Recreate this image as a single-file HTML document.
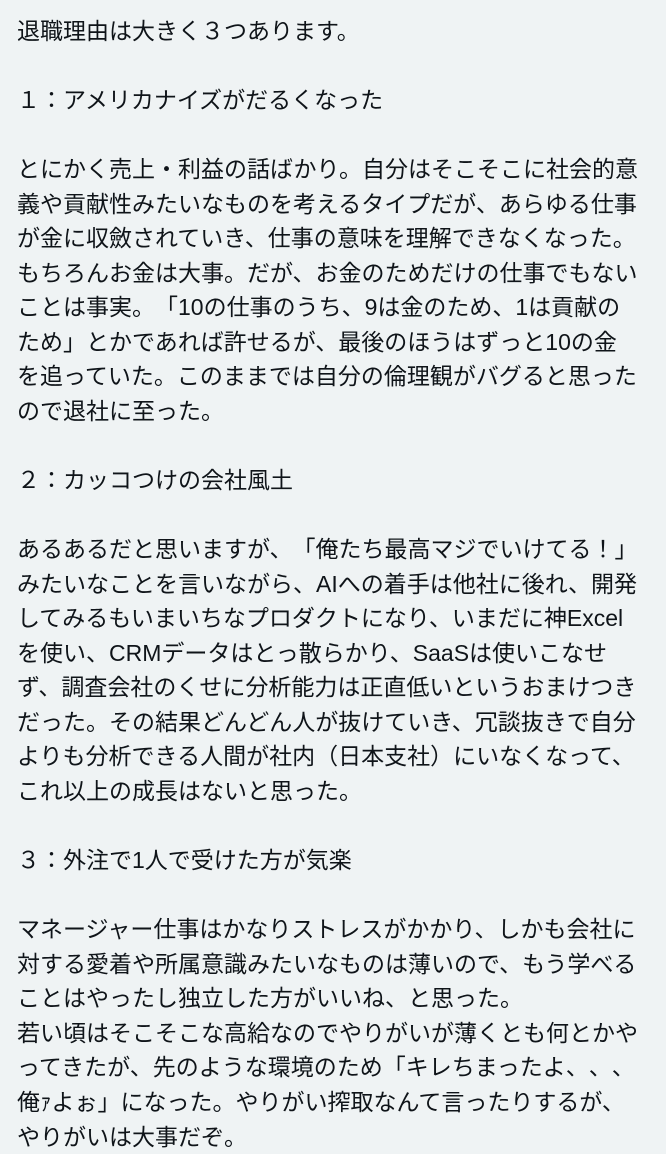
<!DOCTYPE html>
<html><head><meta charset="utf-8"><style>
html,body{margin:0;padding:0;background:#eff3f4;width:666px;height:1150px;overflow:hidden}
.t{position:absolute;left:17px;top:14px;font-family:"Liberation Sans","Noto Sans CJK JP",sans-serif;font-size:23px;line-height:34.55px;color:#0f1419;white-space:nowrap;text-spacing-trim:space-all}
</style></head><body><div class="t">
退職理由は大きく３つあります。<br><br>
１：アメリカナイズがだるくなった<br><br>
とにかく売上・利益の話ばかり。自分はそこそこに社会的意<br>
義や貢献性みたいなものを考えるタイプだが、あらゆる仕事<br>
が金に収斂されていき、仕事の意味を理解できなくなった。<br>
もちろんお金は大事。だが、お金のためだけの仕事でもない<br>
ことは事実。「10の仕事のうち、9は金のため、1は貢献の<br>
ため」とかであれば許せるが、最後のほうはずっと10の金<br>
を追っていた。このままでは自分の倫理観がバグると思った<br>
ので退社に至った。<br><br>
２：カッコつけの会社風土<br><br>
あるあるだと思いますが、「俺たち最高マジでいけてる！」<br>
みたいなことを言いながら、AIへの着手は他社に後れ、開発<br>
してみるもいまいちなプロダクトになり、いまだに神Excel<br>
を使い、CRMデータはとっ散らかり、SaaSは使いこなせ<br>
ず、調査会社のくせに分析能力は正直低いというおまけつき<br>
だった。その結果どんどん人が抜けていき、冗談抜きで自分<br>
よりも分析できる人間が社内（日本支社）にいなくなって、<br>
これ以上の成長はないと思った。<br><br>
３：外注で1人で受けた方が気楽<br><br>
マネージャー仕事はかなりストレスがかかり、しかも会社に<br>
対する愛着や所属意識みたいなものは薄いので、もう学べる<br>
ことはやったし独立した方がいいね、と思った。<br>
若い頃はそこそこな高給なのでやりがいが薄くとも何とかや<br>
ってきたが、先のような環境のため「キレちまったよ、、、<br>
俺ｧよぉ」になった。やりがい搾取なんて言ったりするが、<br>
やりがいは大事だぞ。
</div></body></html>
